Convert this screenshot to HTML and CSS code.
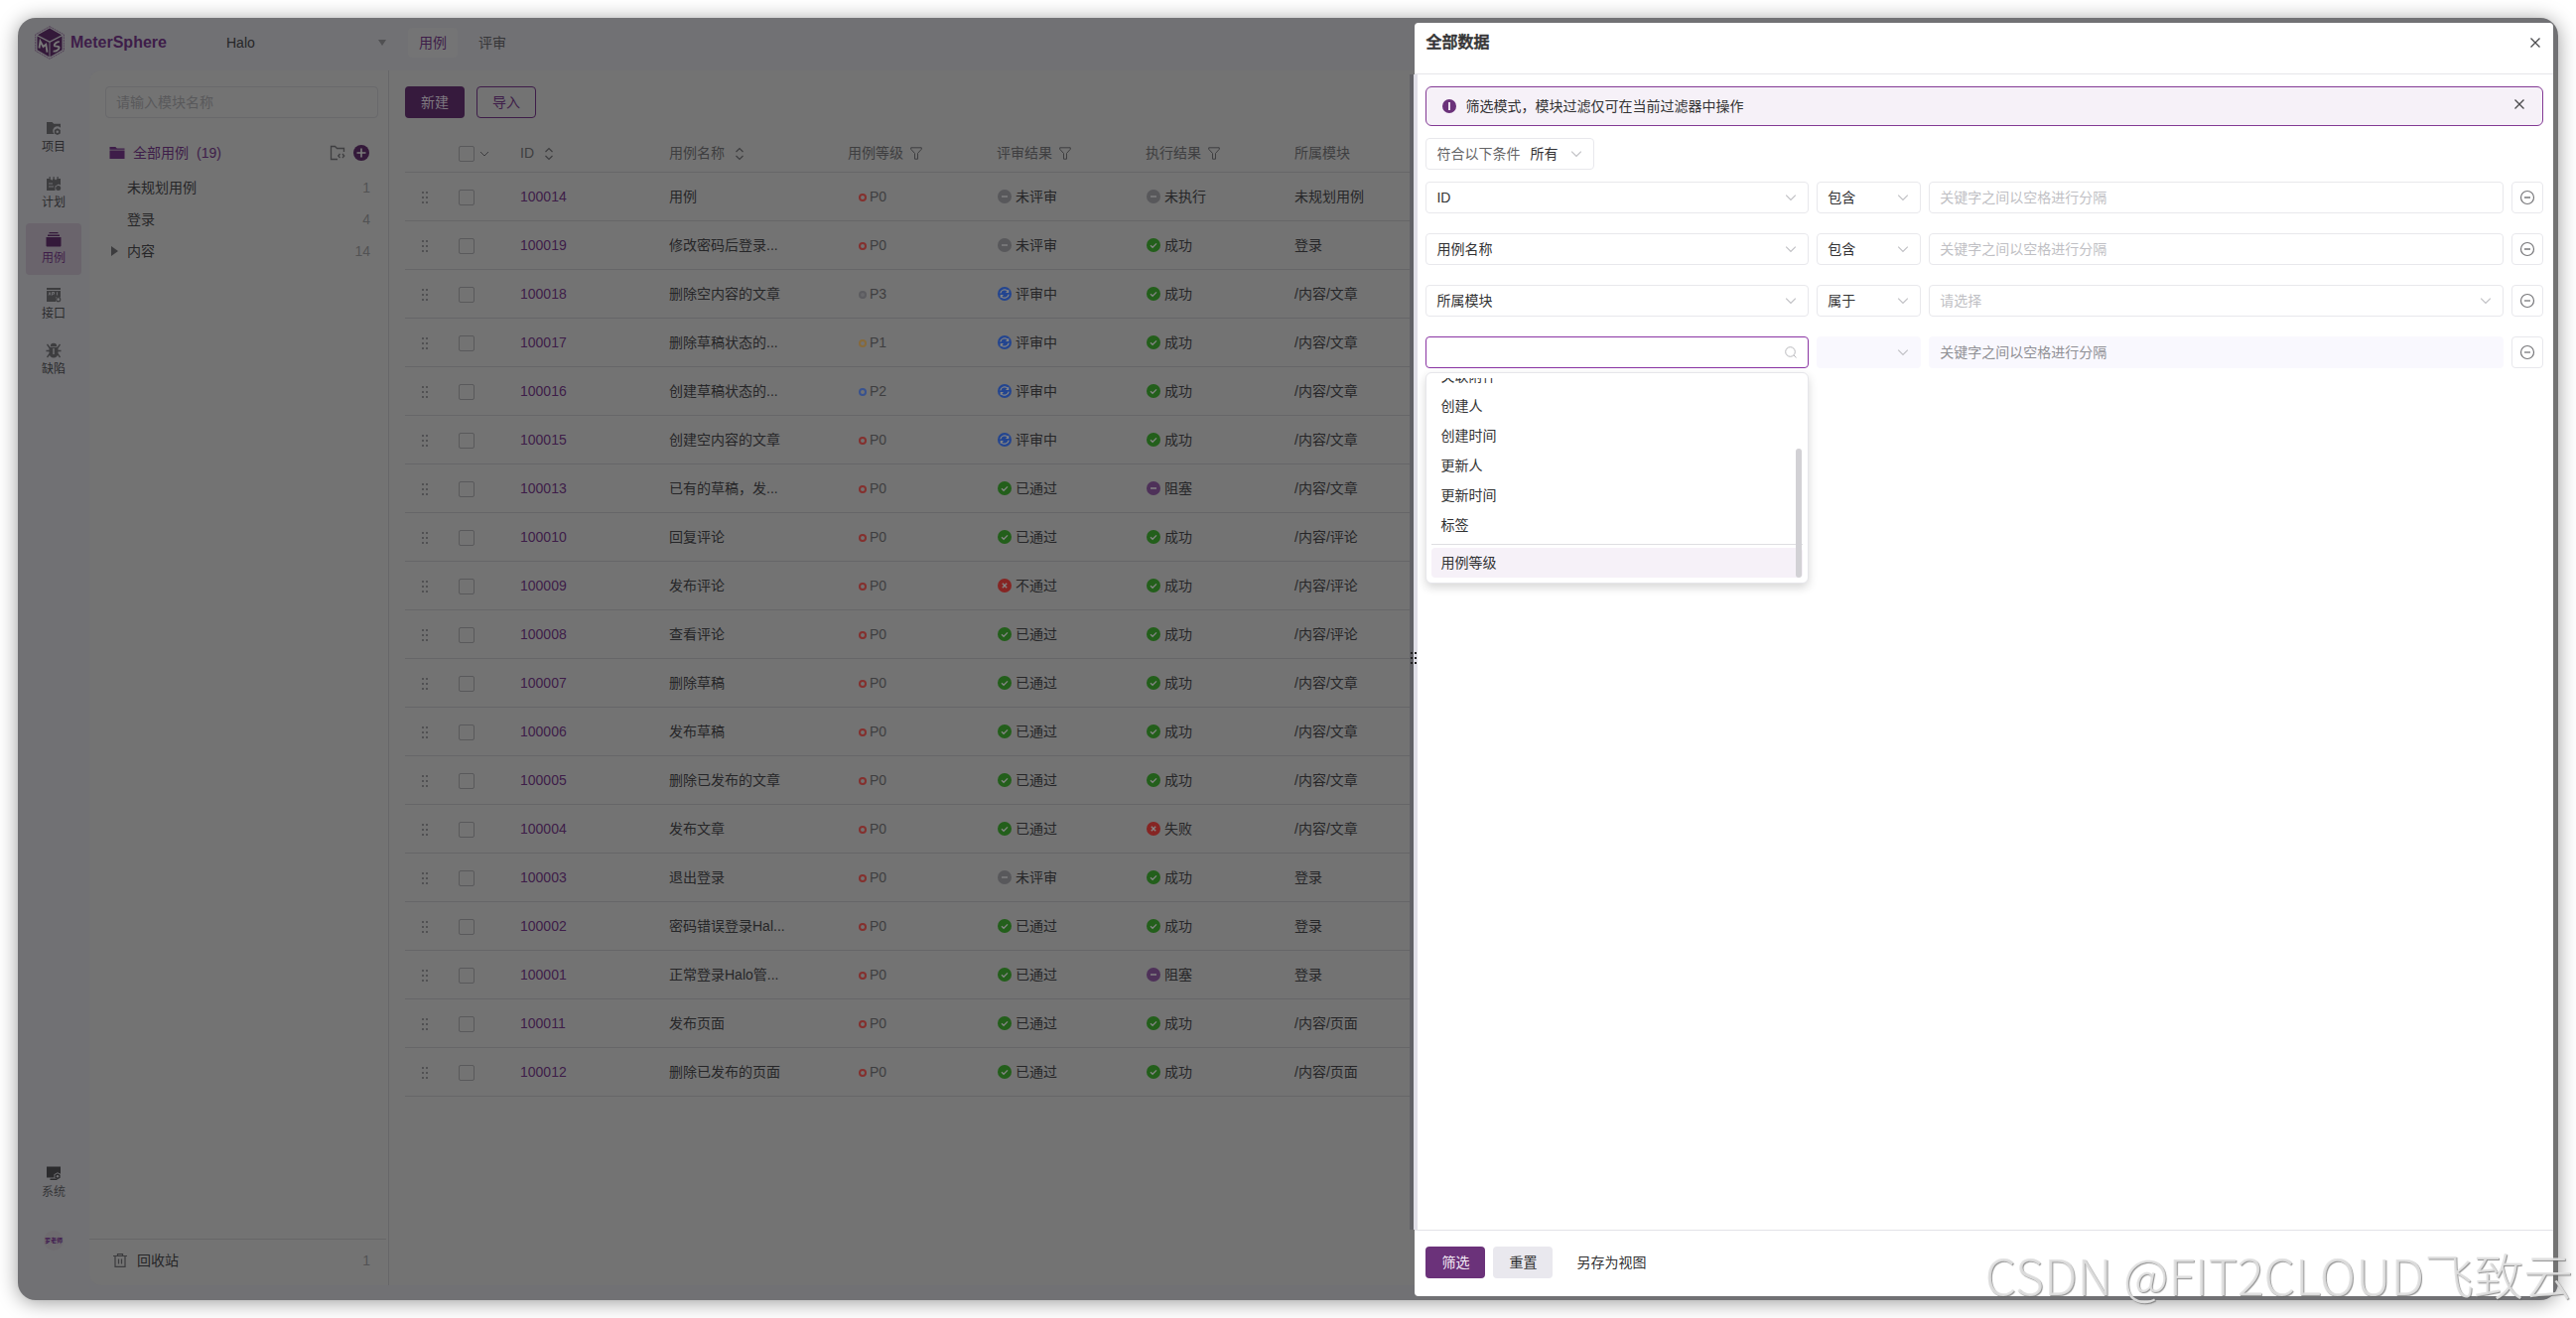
FILE: index.html
```html
<!DOCTYPE html>
<html lang="zh-CN">
<head>
<meta charset="utf-8">
<title>MeterSphere</title>
<link rel="stylesheet" href="styles.css">
</head>
<body>
<svg class="sprite" aria-hidden="true">
  <symbol id="chevron" viewBox="0 0 10 10"><path d="M1 3l4 4 4-4" fill="none" stroke="currentColor"/></symbol>
  <symbol id="close" viewBox="0 0 12 12"><path d="M1.500 1.500l9 9M10.500 1.500l-9 9" fill="none" stroke="currentColor" stroke-width="1.300"/></symbol>
  <symbol id="minus" viewBox="0 0 16 16"><circle cx="8" cy="8" r="6.500" fill="none" stroke="currentColor" stroke-width="1.200"/><path d="M5 8h6" stroke="currentColor" stroke-width="1.300"/></symbol>
  <symbol id="drag" viewBox="0 0 6 12"><path d="M0 0h2v2H0zM4 0h2v2H4zM0 5h2v2H0zM4 5h2v2H4zM0 10h2v2H0zM4 10h2v2H4z" fill="currentColor"/></symbol>
  <symbol id="sort" viewBox="0 0 10 14"><path d="M1.500 5L5 1.500 8.500 5M1.500 9L5 12.500 8.500 9" fill="none" stroke="currentColor" stroke-width="1.200"/></symbol>
  <symbol id="filter" viewBox="0 0 12 13"><path d="M.7.8h10.600v1.500L7.500 6.500v5.700h-3V6.500L.7 2.300z" fill="none" stroke="currentColor"/></symbol>
  <symbol id="ok" viewBox="0 0 14 14"><circle cx="7" cy="7" r="7" fill="#235f1b"/><path d="M4 7.200l2.100 2.100L10 5.400" fill="none" stroke="#858585" stroke-width="1.300"/></symbol>
  <symbol id="none" viewBox="0 0 14 14"><circle cx="7" cy="7" r="7" fill="#58585b"/><path d="M4 7h6" stroke="#7f7f80" stroke-width="1.500"/></symbol>
  <symbol id="block" viewBox="0 0 14 14"><circle cx="7" cy="7" r="7" fill="#4e3159"/><path d="M4 7h6" stroke="#858585" stroke-width="1.500"/></symbol>
  <symbol id="fail" viewBox="0 0 14 14"><circle cx="7" cy="7" r="7" fill="#862523"/><path d="M4.800 4.800l4.400 4.400M9.200 4.800L4.800 9.200" stroke="#858585" stroke-width="1.400"/></symbol>
  <symbol id="going" viewBox="0 0 14 14"><circle cx="7" cy="7" r="7" fill="#234590"/><path d="M2.800 6.400A4.300 4.300 0 0 1 10.200 4.200M11.200 7.600A4.300 4.300 0 0 1 3.800 9.800" fill="none" stroke="#858585" stroke-width="1.200"/><path d="M11.300 2.600v3.300H8zM2.700 11.400V8.100H6z" fill="#858585"/></symbol>
</svg>

<div class="window">
  <header class="topbar">
    <a class="brand" href="#">
      <svg class="brand-logo" viewBox="0 0 30 34">
        <path d="M15 .7L29.300 8.800v16.400L15 33.300.7 25.200V8.800z" fill="none" stroke="#4b3452" stroke-width=".8" stroke-dasharray="2 .7"/>
        <path d="M15 2.500L27 9.300 15 15.500 3 9.300z" fill="#34193a"/>
        <path d="M2.500 10.500l12 6.300v14.500l-12-7zM27.500 10.500l-12 6.300v14.500l12-7z" fill="#34193a"/>
        <path d="M4.500 22.500l1-7 3 5.500 2.800-2.300 1.200 8" fill="none" stroke="#777" stroke-width="1.900"/>
        <path d="M24.800 16.200c-2-.4-5.300 1.600-5.100 3.600.2 1.800 4.800-.2 4.900 2.200 0 2.200-4 4.200-6 3.500" fill="none" stroke="#777" stroke-width="1.900"/>
      </svg>
      <span>MeterSphere</span>
    </a>
    <div class="project">
      <select class="project-select" aria-label="项目"><option>Halo</option></select>
      <svg class="project-arrow" viewBox="0 0 8 6"><path d="M0 0h8L4 6z" fill="#505052"/></svg>
    </div>
    <nav class="tabs">
      <a class="tab tab-on" href="#">用例</a>
      <a class="tab" href="#">评审</a>
    </nav>
  </header>

  <div class="layout">
    <nav class="side">
      <a class="side-item" href="#">
        <svg class="side-icon" viewBox="0 0 16 16"><path d="M1 2h5.500l1.700 1.700H15v4a4.500 4.500 0 0 0-6.500 6.300H1z" fill="currentColor"/><path d="M11.800 8.200l3 1.700v3.500l-3 1.700-3-1.700V9.900z" fill="currentColor"/><circle cx="11.800" cy="11.700" r="1.300" fill="#717174"/></svg>
        <span>项目</span></a>
      <a class="side-item" href="#">
        <svg class="side-icon" viewBox="0 0 16 16"><path d="M1 3h2.500V1h1.200v2.500l1.800 1.200L7.500 3V1h1.200v2L10 4.500 11.500 3V1h1.200v2H15v6.500L13 8.600l-3.500 2V15H1z" fill="currentColor"/><path d="M3 8h4M3 11h5" stroke="#717174"/><circle cx="12.700" cy="12.500" r="2.500" fill="currentColor"/></svg>
        <span>计划</span></a>
      <a class="side-item side-on" href="#">
        <svg class="side-icon" viewBox="0 0 16 16"><path d="M3.500 1h9v1.200h-9zM2 3.500h12v1.400H2zM.5 6h15v8.500a1 1 0 0 1-1 1h-13a1 1 0 0 1-1-1z" fill="currentColor"/></svg>
        <span>用例</span></a>
      <a class="side-item" href="#">
        <svg class="side-icon" viewBox="0 0 16 16"><path d="M1 1h14v2H1zM1 4h14v6.500h-5V15H1z" fill="currentColor"/><path d="M3 8.500l1-3 1 3M6.500 8.500v-3h2v1.700h-2M11.500 5.200v3.300" fill="none" stroke="#717174" stroke-width=".9"/><circle cx="12.700" cy="12.700" r="2" fill="none" stroke="currentColor" stroke-width="1.200"/></svg>
        <span>接口</span></a>
      <a class="side-item" href="#">
        <svg class="side-icon" viewBox="0 0 16 16"><path d="M4.800 4a3.200 3.200 0 0 1 6.400 0zM3.500 4.800h9V11a4.500 4.500 0 0 1-9 0z" fill="currentColor"/><path d="M1.500 2l2.500 3.500M14.500 2L12 5.500M.5 8.500h15M1.500 15L4 11.500M14.500 15L12 11.500" fill="none" stroke="currentColor" stroke-width="1.300"/><path d="M8 6v6" stroke="#717174" stroke-width="1.400"/></svg>
        <span>缺陷</span></a>
      <a class="side-item side-last" href="#">
        <svg class="side-icon" viewBox="0 0 16 16"><path d="M1 1.500h14v7.300l-3-1.600-3.500 2v3.300H1z" fill="currentColor"/><path d="M4.500 13.500h7V15h-7z" fill="currentColor"/><path d="M12 8.300l2.600 1.500v3L12 14.300l-2.600-1.500v-3z" fill="currentColor"/><circle cx="12" cy="11.300" r="1.200" fill="#717174"/></svg>
        <span>系统</span></a>
      <span class="avatar">罗老师</span>
    </nav>

    <aside class="modules">
      <input class="module-search" type="text" placeholder="请输入模块名称" aria-label="模块名称">
      <div class="module-all">
        <svg class="icon16" viewBox="0 0 16 16"><path d="M.5 2h5.800l1.500 1.500h7.700v1.300H.5zM.5 5.600h15V14H.5z" fill="currentColor"/></svg>
        <span class="module-all-name">全部用例</span><span>(19)</span>
        <button class="icon-btn module-tool" aria-label="展开"><svg class="icon16" viewBox="0 0 16 16"><path d="M8 14.500H1.500v-13h4l2 2h7V7M10.500 9L8.800 11l1.700 2M13 9l1.700 2L13 13" fill="none" stroke="#3f3f41" stroke-width="1.300"/></svg></button>
        <button class="icon-btn" aria-label="新增"><svg class="icon16" viewBox="0 0 16 16"><circle cx="8" cy="8" r="8" fill="#34193a"/><path d="M8 3.500v9M3.500 8h9" stroke="#7b7b7b" stroke-width="1.600"/></svg></button>
      </div>
      <ul class="tree">
        <li class="tree-item"><span>未规划用例</span><span class="count">1</span></li>
        <li class="tree-item"><span>登录</span><span class="count">4</span></li>
        <li class="tree-item tree-parent"><svg class="tree-caret" viewBox="0 0 7 10"><path d="M0 0l7 5-7 5z" fill="#3c3c3e"/></svg><span>内容</span><span class="count">14</span></li>
      </ul>
      <div class="recycle">
        <svg class="recycle-icon" viewBox="0 0 14 14"><path d="M0 2.500h14M4.500 2V.7h5V2M2 2.500v10.800h10V2.500M5.500 5.500v5M8.500 5.500v5" fill="none" stroke="#3c3c3e" stroke-width="1.200"/></svg>
        <span>回收站</span><span class="count">1</span>
      </div>
    </aside>

    <main class="main">
      <div class="actions">
        <button class="btn btn-dim-solid">新建</button>
        <button class="btn btn-dim-line">导入</button>
      </div>
      <table class="cases">
        <colgroup><col class="c-drag"><col class="c-check"><col class="c-std"><col class="c-name"><col class="c-std"><col class="c-std"><col class="c-std"><col></colgroup>
        <thead>
          <tr><th></th><th class="check"><input class="box" type="checkbox" aria-label="全选"><svg class="head-chevron"><use href="#chevron"/></svg></th>
          <th>ID<svg class="sort"><use href="#sort"/></svg></th><th>用例名称<svg class="sort"><use href="#sort"/></svg></th>
          <th>用例等级<svg class="filter"><use href="#filter"/></svg></th><th>评审结果<svg class="filter"><use href="#filter"/></svg></th><th>执行结果<svg class="filter"><use href="#filter"/></svg></th><th>所属模块</th></tr>
        </thead>
        <tbody>
          <tr><td class="drag"><svg><use href="#drag"/></svg></td><td class="check"><input class="box" type="checkbox" aria-label="100014"></td><td><a href="#">100014</a></td><td>用例</td><td class="level"><i class="dot p0"></i>P0</td><td><svg class="st"><use href="#none"/></svg>未评审</td><td><svg class="st"><use href="#none"/></svg>未执行</td><td>未规划用例</td></tr>
          <tr><td class="drag"><svg><use href="#drag"/></svg></td><td class="check"><input class="box" type="checkbox" aria-label="100019"></td><td><a href="#">100019</a></td><td>修改密码后登录...</td><td class="level"><i class="dot p0"></i>P0</td><td><svg class="st"><use href="#none"/></svg>未评审</td><td><svg class="st"><use href="#ok"/></svg>成功</td><td>登录</td></tr>
          <tr><td class="drag"><svg><use href="#drag"/></svg></td><td class="check"><input class="box" type="checkbox" aria-label="100018"></td><td><a href="#">100018</a></td><td>删除空内容的文章</td><td class="level"><i class="dot p3"></i>P3</td><td><svg class="st"><use href="#going"/></svg>评审中</td><td><svg class="st"><use href="#ok"/></svg>成功</td><td>/内容/文章</td></tr>
          <tr><td class="drag"><svg><use href="#drag"/></svg></td><td class="check"><input class="box" type="checkbox" aria-label="100017"></td><td><a href="#">100017</a></td><td>删除草稿状态的...</td><td class="level"><i class="dot p1"></i>P1</td><td><svg class="st"><use href="#going"/></svg>评审中</td><td><svg class="st"><use href="#ok"/></svg>成功</td><td>/内容/文章</td></tr>
          <tr><td class="drag"><svg><use href="#drag"/></svg></td><td class="check"><input class="box" type="checkbox" aria-label="100016"></td><td><a href="#">100016</a></td><td>创建草稿状态的...</td><td class="level"><i class="dot p2"></i>P2</td><td><svg class="st"><use href="#going"/></svg>评审中</td><td><svg class="st"><use href="#ok"/></svg>成功</td><td>/内容/文章</td></tr>
          <tr><td class="drag"><svg><use href="#drag"/></svg></td><td class="check"><input class="box" type="checkbox" aria-label="100015"></td><td><a href="#">100015</a></td><td>创建空内容的文章</td><td class="level"><i class="dot p0"></i>P0</td><td><svg class="st"><use href="#going"/></svg>评审中</td><td><svg class="st"><use href="#ok"/></svg>成功</td><td>/内容/文章</td></tr>
          <tr><td class="drag"><svg><use href="#drag"/></svg></td><td class="check"><input class="box" type="checkbox" aria-label="100013"></td><td><a href="#">100013</a></td><td>已有的草稿，发...</td><td class="level"><i class="dot p0"></i>P0</td><td><svg class="st"><use href="#ok"/></svg>已通过</td><td><svg class="st"><use href="#block"/></svg>阻塞</td><td>/内容/文章</td></tr>
          <tr><td class="drag"><svg><use href="#drag"/></svg></td><td class="check"><input class="box" type="checkbox" aria-label="100010"></td><td><a href="#">100010</a></td><td>回复评论</td><td class="level"><i class="dot p0"></i>P0</td><td><svg class="st"><use href="#ok"/></svg>已通过</td><td><svg class="st"><use href="#ok"/></svg>成功</td><td>/内容/评论</td></tr>
          <tr><td class="drag"><svg><use href="#drag"/></svg></td><td class="check"><input class="box" type="checkbox" aria-label="100009"></td><td><a href="#">100009</a></td><td>发布评论</td><td class="level"><i class="dot p0"></i>P0</td><td><svg class="st"><use href="#fail"/></svg>不通过</td><td><svg class="st"><use href="#ok"/></svg>成功</td><td>/内容/评论</td></tr>
          <tr><td class="drag"><svg><use href="#drag"/></svg></td><td class="check"><input class="box" type="checkbox" aria-label="100008"></td><td><a href="#">100008</a></td><td>查看评论</td><td class="level"><i class="dot p0"></i>P0</td><td><svg class="st"><use href="#ok"/></svg>已通过</td><td><svg class="st"><use href="#ok"/></svg>成功</td><td>/内容/评论</td></tr>
          <tr><td class="drag"><svg><use href="#drag"/></svg></td><td class="check"><input class="box" type="checkbox" aria-label="100007"></td><td><a href="#">100007</a></td><td>删除草稿</td><td class="level"><i class="dot p0"></i>P0</td><td><svg class="st"><use href="#ok"/></svg>已通过</td><td><svg class="st"><use href="#ok"/></svg>成功</td><td>/内容/文章</td></tr>
          <tr><td class="drag"><svg><use href="#drag"/></svg></td><td class="check"><input class="box" type="checkbox" aria-label="100006"></td><td><a href="#">100006</a></td><td>发布草稿</td><td class="level"><i class="dot p0"></i>P0</td><td><svg class="st"><use href="#ok"/></svg>已通过</td><td><svg class="st"><use href="#ok"/></svg>成功</td><td>/内容/文章</td></tr>
          <tr><td class="drag"><svg><use href="#drag"/></svg></td><td class="check"><input class="box" type="checkbox" aria-label="100005"></td><td><a href="#">100005</a></td><td>删除已发布的文章</td><td class="level"><i class="dot p0"></i>P0</td><td><svg class="st"><use href="#ok"/></svg>已通过</td><td><svg class="st"><use href="#ok"/></svg>成功</td><td>/内容/文章</td></tr>
          <tr><td class="drag"><svg><use href="#drag"/></svg></td><td class="check"><input class="box" type="checkbox" aria-label="100004"></td><td><a href="#">100004</a></td><td>发布文章</td><td class="level"><i class="dot p0"></i>P0</td><td><svg class="st"><use href="#ok"/></svg>已通过</td><td><svg class="st"><use href="#fail"/></svg>失败</td><td>/内容/文章</td></tr>
          <tr><td class="drag"><svg><use href="#drag"/></svg></td><td class="check"><input class="box" type="checkbox" aria-label="100003"></td><td><a href="#">100003</a></td><td>退出登录</td><td class="level"><i class="dot p0"></i>P0</td><td><svg class="st"><use href="#none"/></svg>未评审</td><td><svg class="st"><use href="#ok"/></svg>成功</td><td>登录</td></tr>
          <tr><td class="drag"><svg><use href="#drag"/></svg></td><td class="check"><input class="box" type="checkbox" aria-label="100002"></td><td><a href="#">100002</a></td><td>密码错误登录Hal...</td><td class="level"><i class="dot p0"></i>P0</td><td><svg class="st"><use href="#ok"/></svg>已通过</td><td><svg class="st"><use href="#ok"/></svg>成功</td><td>登录</td></tr>
          <tr><td class="drag"><svg><use href="#drag"/></svg></td><td class="check"><input class="box" type="checkbox" aria-label="100001"></td><td><a href="#">100001</a></td><td>正常登录Halo管...</td><td class="level"><i class="dot p0"></i>P0</td><td><svg class="st"><use href="#ok"/></svg>已通过</td><td><svg class="st"><use href="#block"/></svg>阻塞</td><td>登录</td></tr>
          <tr><td class="drag"><svg><use href="#drag"/></svg></td><td class="check"><input class="box" type="checkbox" aria-label="100011"></td><td><a href="#">100011</a></td><td>发布页面</td><td class="level"><i class="dot p0"></i>P0</td><td><svg class="st"><use href="#ok"/></svg>已通过</td><td><svg class="st"><use href="#ok"/></svg>成功</td><td>/内容/页面</td></tr>
          <tr><td class="drag"><svg><use href="#drag"/></svg></td><td class="check"><input class="box" type="checkbox" aria-label="100012"></td><td><a href="#">100012</a></td><td>删除已发布的页面</td><td class="level"><i class="dot p0"></i>P0</td><td><svg class="st"><use href="#ok"/></svg>已通过</td><td><svg class="st"><use href="#ok"/></svg>成功</td><td>/内容/页面</td></tr>
        </tbody>
      </table>
    </main>
  </div>

  <section class="drawer">
    <header class="drawer-head">
      <h2 class="drawer-title">全部数据</h2>
      <button class="icon-btn" aria-label="关闭"><svg class="close"><use href="#close"/></svg></button>
    </header>
    <div class="drawer-body">
      <div class="resize"><svg class="resize-dots"><use href="#drag"/></svg></div>
      <div class="alert">
        <svg class="alert-icon" viewBox="0 0 14 14"><circle cx="7" cy="7" r="7" fill="#6b327a"/><path d="M6 3h2v8H6z" fill="#e9ddec"/></svg>
        <span>筛选模式，模块过滤仅可在当前过滤器中操作</span>
        <button class="icon-btn alert-close" aria-label="关闭提示"><svg class="close"><use href="#close"/></svg></button>
      </div>
      <div class="match">
        <label class="match-label" for="match">符合以下条件</label>
        <select class="match-select" id="match"><option>所有</option></select>
        <svg class="match-arrow"><use href="#chevron"/></svg>
      </div>
      <form class="rules">
        <div class="rule">
          <div class="field"><select class="control" aria-label="字段"><option>ID</option></select><svg class="arrow"><use href="#chevron"/></svg></div>
          <div class="field"><select class="control" aria-label="关系"><option>包含</option></select><svg class="arrow"><use href="#chevron"/></svg></div>
          <input class="control" type="text" placeholder="关键字之间以空格进行分隔" aria-label="值">
          <button class="remove" type="button" aria-label="删除条件"><svg class="icon16"><use href="#minus"/></svg></button>
        </div>
        <div class="rule">
          <div class="field"><select class="control" aria-label="字段"><option>用例名称</option></select><svg class="arrow"><use href="#chevron"/></svg></div>
          <div class="field"><select class="control" aria-label="关系"><option>包含</option></select><svg class="arrow"><use href="#chevron"/></svg></div>
          <input class="control" type="text" placeholder="关键字之间以空格进行分隔" aria-label="值">
          <button class="remove" type="button" aria-label="删除条件"><svg class="icon16"><use href="#minus"/></svg></button>
        </div>
        <div class="rule">
          <div class="field"><select class="control" aria-label="字段"><option>所属模块</option></select><svg class="arrow"><use href="#chevron"/></svg></div>
          <div class="field"><select class="control" aria-label="关系"><option>属于</option></select><svg class="arrow"><use href="#chevron"/></svg></div>
          <div class="field"><select class="control control-empty" aria-label="值"><option>请选择</option></select><svg class="arrow"><use href="#chevron"/></svg></div>
          <button class="remove" type="button" aria-label="删除条件"><svg class="icon16"><use href="#minus"/></svg></button>
        </div>
        <div class="rule">
          <div class="field">
            <input class="control control-open" type="text" aria-label="搜索字段">
            <svg class="search" viewBox="0 0 12 12"><circle cx="5.500" cy="5.500" r="4.800" fill="none" stroke="currentColor"/><path d="M9 9l2.500 2.500" stroke="currentColor"/></svg>
            <div class="menu">
              <ul class="menu-list" role="listbox" aria-label="字段">
                <li class="menu-item" role="option">关联附件</li>
                <li class="menu-item" role="option">创建人</li>
                <li class="menu-item" role="option">创建时间</li>
                <li class="menu-item" role="option">更新人</li>
                <li class="menu-item" role="option">更新时间</li>
                <li class="menu-item" role="option">标签</li>
                <li class="menu-line" role="separator"></li>
                <li class="menu-item menu-on" role="option">用例等级</li>
              </ul>
              <span class="menu-thumb"></span>
            </div>
          </div>
          <div class="field"><select class="control" aria-label="关系" disabled><option></option></select><svg class="arrow"><use href="#chevron"/></svg></div>
          <input class="control" type="text" placeholder="关键字之间以空格进行分隔" aria-label="值" disabled>
          <button class="remove" type="button" aria-label="删除条件"><svg class="icon16"><use href="#minus"/></svg></button>
        </div>
      </form>
    </div>
    <footer class="drawer-foot">
      <button class="btn btn-primary">筛选</button>
      <button class="btn btn-plain">重置</button>
      <button class="btn btn-text">另存为视图</button>
    </footer>
  </section>
</div>
<div class="watermark">CSDN @FIT2CLOUD飞致云</div>
</body>
</html>
```
FILE: styles.css
```css
:root {
  --dim-bar: #717174;
  --dim-page: #737373;
  --dim-line: #666668;
  --dim-text: #262628;
  --dim-sub: #3e3e40;
  --dim-purple: #3e1d49;
  --line: #e8e8ec;
  --text: #323233;
}

* { box-sizing: border-box; }

body {
  margin: 0;
  padding: 18px;
  background: #fff;
  overflow: hidden;
  font: 14px/22px "Liberation Sans", "Noto Sans CJK SC", sans-serif;
  color: var(--dim-text);
}

button, input, select { font: inherit; color: inherit; margin: 0; }
select { appearance: none; background: none; border: 0; padding: 0; }
button { cursor: pointer; }
a { color: inherit; text-decoration: none; }
ul { list-style: none; margin: 0; padding: 0; }
svg { display: block; flex: none; }
.sprite { position: absolute; width: 0; height: 0; }
.icon16 { width: 16px; height: 16px; }
.icon-btn { display: flex; border: 0; padding: 0; background: none; }

.window {
  position: relative;
  display: flex;
  flex-direction: column;
  height: calc(100vh - 36px);
  border-radius: 18px;
  background: var(--dim-bar);
  box-shadow: 0 2px 20px rgba(0, 0, 0, 0.4);
  overflow: hidden;
}

/* top bar */
.topbar { display: flex; align-items: center; height: 53px; padding: 0 17px 4px; }
.brand {
  display: flex; align-items: center; gap: 6px; width: 193px;
  font-size: 16px; font-weight: bold; color: var(--dim-purple);
}
.brand-logo { width: 30px; height: 34px; }
.project { display: flex; align-items: center; width: 183px; }
.project-select { flex: 1; }
.project-arrow { width: 8px; height: 6px; margin-right: 22px; }
.tabs { display: flex; gap: 10px; }
.tab { padding: 4px 11px; border-radius: 4px; color: #363638; }
.tab-on { background: #747475; color: var(--dim-purple); }

/* layout */
.layout { flex: 1; display: flex; min-height: 0; padding-bottom: 15px; }
.side {
  display: flex; flex-direction: column; align-items: center; gap: 4px;
  width: 72px; padding: 42px 0 35px;
}
.side-item {
  display: flex; flex-direction: column; align-items: center;
  width: 56px; height: 52px; padding-top: 8px; border-radius: 4px;
  font-size: 12px; color: #2b2b2d;
}
.side-icon { width: 16px; height: 16px; color: #3d3d3f; }
.side-on { background: #6a646c; color: var(--dim-purple); }
.side-on .side-icon { color: #34193a; }
.side-last { margin-top: auto; color: #363638; }
.side-last .side-icon { color: #2b2b2d; }
.avatar {
  display: grid; place-items: center; width: 20px; height: 20px; margin-top: 18px;
  border-radius: 50%; background: #6f6c70; color: #421b50;
  font-size: 6px; line-height: 8px; font-weight: bold; white-space: nowrap;
}

/* modules */
.modules {
  display: flex; flex-direction: column; width: 302px; padding-top: 16px;
  background: var(--dim-page); border-right: 1px solid var(--dim-line);
  border-radius: 12px 0 0 12px;
}
.module-search {
  height: 32px; margin: 0 10px 0 16px; padding: 0 10px;
  border: 1px solid #69696b; border-radius: 4px; background: none;
}
.module-search::placeholder { color: #59595b; }
.module-all {
  display: flex; align-items: center; height: 24px;
  margin: 23px 19px 7px 20px; color: var(--dim-purple);
}
.module-all-name { margin: 0 8px; }
.module-tool { margin: 0 8px 0 auto; }
.tree-item { display: flex; align-items: center; height: 32px; padding: 0 18px 0 38px; }
.tree-parent { padding-left: 22px; }
.tree-caret { width: 7px; height: 10px; margin-right: 9px; }
.count { margin-left: auto; color: #525254; }
.recycle {
  display: flex; align-items: center; height: 47px; margin: auto 2px 0 0; padding: 0 16px 4px 24px;
  border-top: 1px solid var(--dim-line);
}
.recycle-icon { width: 14px; height: 14px; margin-right: 10px; }

/* case table */
.main { flex: 1; min-width: 0; padding: 16px; background: var(--dim-page); }
.actions { display: flex; gap: 12px; }
.btn {
  height: 32px; padding: 0 15px; border: 1px solid transparent; border-radius: 4px;
  background: none; line-height: 22px;
}
.btn-dim-solid { background: #361a3d; color: #7e7980; }
.btn-dim-line { border-color: var(--dim-purple); color: var(--dim-purple); }
.cases { width: 100%; margin-top: 16px; table-layout: fixed; border-collapse: separate; border-spacing: 0; }
.c-drag { width: 38px; }
.c-check { width: 62px; }
.c-std { width: 150px; }
.c-name { width: 180px; }
.cases th, .cases td {
  height: 49px; padding: 0 16px; text-align: left; white-space: nowrap;
  border-bottom: 1px solid var(--dim-line);
}
.cases th { height: 39px; font-weight: normal; color: var(--dim-sub); }
.cases svg { display: inline-block; vertical-align: middle; }
.cases a { color: var(--dim-purple); }
.cases .drag { padding: 0 17px; color: #515153; }
.drag svg { width: 6px; height: 12px; }
.cases .check { padding-right: 0; }
.box {
  appearance: none; width: 16px; height: 16px; vertical-align: middle;
  border: 1px solid #59595b; border-radius: 2px;
}
.head-chevron { width: 10px; height: 10px; margin-left: 5px; }
.sort { width: 10px; height: 14px; margin-left: 10px; }
.filter { width: 12px; height: 13px; margin: -2px 0 0 7px; }
.cases .level { padding-left: 27px; color: var(--dim-sub); }
.dot { display: inline-block; width: 8px; height: 8px; margin-right: 3px; border: 2px solid; border-radius: 50%; }
.p0 { color: #84302e; }
.p1 { color: #876a3a; }
.p2 { color: #38528f; }
.p3 { color: #5c5c60; background: #68686b; }
.cases .st { width: 14px; height: 14px; margin: -2px 4px 0 1px; }

/* drawer */
.drawer {
  position: absolute; left: 55%; right: 5px; top: 5px; bottom: 4px;
  display: flex; flex-direction: column; border-radius: 4px;
  background: #fff; color: var(--text);
}
.drawer-head {
  display: flex; justify-content: space-between; height: 52px;
  padding: 8px 12px 8px 11px; border-bottom: 1px solid #e6e6e9;
}
.drawer-title { margin: 0; font-size: 16px; line-height: 24px; font-weight: 500; -webkit-text-stroke: 0.5px; }
.drawer-head .icon-btn { align-self: flex-start; padding: 6px 0; }
.close { width: 12px; height: 12px; color: #4b4b4d; }
.drawer-body { position: relative; flex: 1; padding: 12px 10px 12px 11px; }
.resize {
  position: absolute; top: 0; bottom: 0; left: -5px; width: 8px; padding-top: 12px;
  display: grid; place-items: center;
  background: linear-gradient(90deg, #626267 50%, #e0dfe7 50%);
}
.resize-dots { width: 6px; height: 12px; color: #222; }
.alert {
  display: flex; align-items: center; height: 40px; padding: 0 17px 0 16px;
  border: 1px solid #833a94; border-radius: 6px; background: #f6f1f8;
}
.alert-icon { width: 14px; height: 14px; margin-right: 9px; }
.alert-close { margin: 0 0 4px auto; }
.match {
  display: inline-flex; align-items: center; height: 32px; margin: 12px 0; padding: 0 11px 0 10px;
  border: 1px solid var(--line); border-radius: 4px; vertical-align: top;
}
.match-label { color: #646466; margin-right: 10px; }
.match-select { width: 41px; }
.match-arrow { width: 12px; height: 12px; color: #c0c0c4; }
.rules { display: grid; gap: 20px; }
.rule { display: grid; grid-template-columns: 2fr 105px 3fr 32px; gap: 8px; }
.field { position: relative; }
.control {
  width: 100%; height: 32px; padding: 0 10px;
  border: 1px solid var(--line); border-radius: 4px; background: #fff;
}
.control::placeholder { color: #bfbfc4; }
.control-empty { color: #bfbfc4; }
.control-open { border-color: #8a35a3; outline: none; }
.control:disabled { border-color: #f9f8fe; background: #f9f8fe; opacity: 1; }
.control:disabled::placeholder { color: #8f8f94; }
.arrow { position: absolute; right: 12px; top: 10px; width: 12px; height: 12px; color: #c0c0c4; }
.search { position: absolute; right: 12px; top: 10px; width: 12px; height: 12px; color: #b8b8bc; }
.remove {
  display: grid; place-items: center; width: 32px; height: 32px; padding: 0;
  border: 1px solid var(--line); border-radius: 4px; background: #fff; color: #77777a;
}
.menu {
  position: absolute; z-index: 2; left: 0; right: 0; top: 36px; height: 213px; padding: 5px;
  border: 1px solid #e6e6ea; border-radius: 6px; background: #fff;
  box-shadow: 0 4px 10px rgba(0, 0, 0, 0.16);
}
.menu-list { display: flex; flex-direction: column; justify-content: flex-end; height: 100%; overflow: hidden; }
.menu-item { flex: none; height: 30px; padding: 0 9px; line-height: 30px; }
.menu-line { flex: none; height: 1px; margin: 4px 0 3px; background: #dedee2; }
.menu-on { border-radius: 4px; background: #f6f1f8; }
.menu-thumb { position: absolute; right: 6px; bottom: 5px; width: 6px; height: 130px; border-radius: 3px; background: #d2d1d5; }
.drawer-foot { display: flex; gap: 8px; height: 67px; padding: 16px 11px; border-top: 1px solid #e3e3e8; }
.btn-primary { background: #6b327a; color: #f3eaf5; }
.btn-plain { background: #e9e8ee; }

.watermark {
  position: absolute; right: 3px; bottom: 15px;
  font: 300 50px/60px "Noto Sans CJK SC", sans-serif; white-space: nowrap;
  color: rgba(226, 226, 226, 0.9); text-shadow: 1px 1px 1px rgba(100, 100, 100, 0.7);
}
```
